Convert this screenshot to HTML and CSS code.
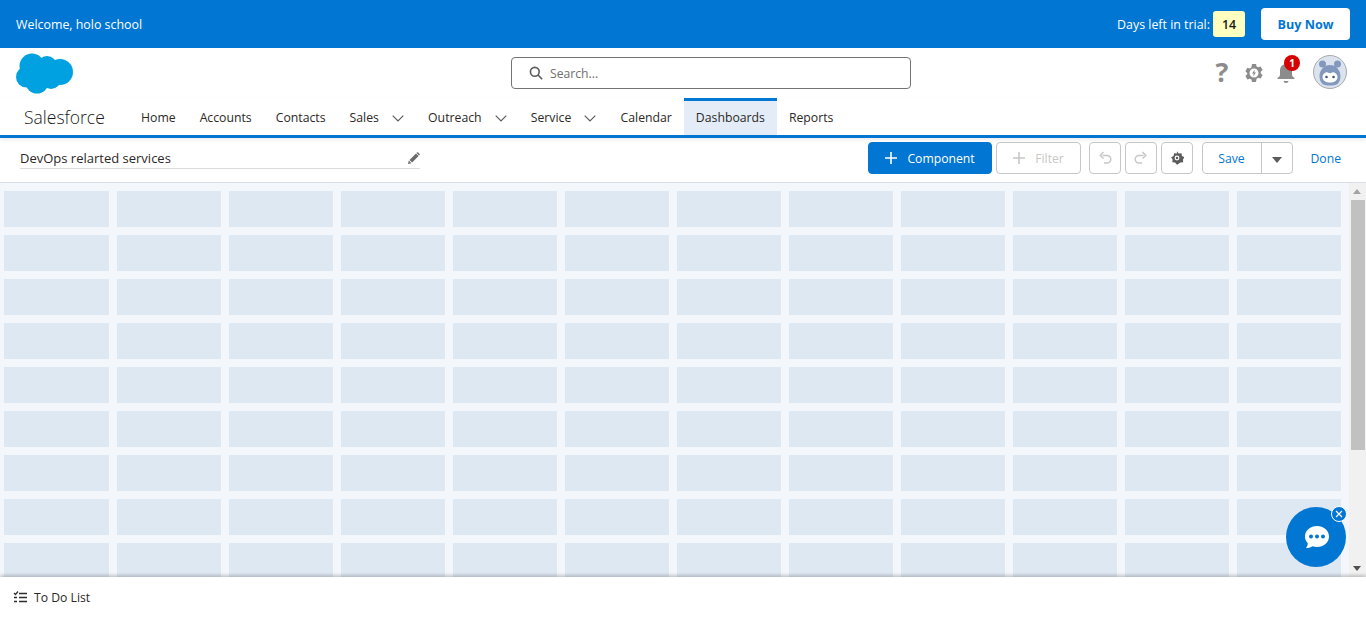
FILE: index.html
```html
<!DOCTYPE html>
<html lang="en">
<head>
  <meta charset="UTF-8">
  <meta name="viewport" content="width=device-width, initial-scale=1.0">
  <title>Salesforce - Dashboard Builder</title>
  <link rel="stylesheet" href="styles.css">
</head>
<body>

<div class="trial-bar">
  <span class="welcome">Welcome, holo school</span>
  <div class="trial-right">
    <span>Days left in trial:</span>
    <span class="days">14</span>
    <button class="buy">Buy Now</button>
  </div>
</div>

<header class="top">
  <svg class="logo" width="58" height="41" viewBox="0 0 58 41">
    <g fill="#00a1e0">
      <circle cx="16" cy="13" r="12.5"/>
      <circle cx="31" cy="13" r="10"/>
      <circle cx="44" cy="19" r="13"/>
      <circle cx="10.5" cy="24" r="10.5"/>
      <circle cx="21" cy="29" r="11.5"/>
      <circle cx="35" cy="26" r="10"/>
    </g>
  </svg>
  <div class="search">
    <svg width="14" height="14" viewBox="0 0 14 14" fill="none" stroke="#5c5c5c" stroke-width="1.6">
      <circle cx="5.8" cy="5.8" r="4.4"/>
      <path d="M9 9l4.2 4.2"/>
    </svg>
    <span>Search...</span>
  </div>
  <div class="top-icons">
    <span class="help">?</span>
    <svg class="gear" width="20" height="20" viewBox="0 0 20 20">
      <path fill="#8c8c8c" fill-rule="evenodd" d="M8 1h4l.6 2.4 1.6.9 2.4-.7 2 3.4-1.800 1.700v1.700l1.800 1.700-2 3.400-2.400-.7-1.600.9L12 19H8l-.6-2.400-1.600-.9-2.400.7-2-3.400 1.800-1.700V9.900L1.400 8.200l2-3.400 2.400.7 1.600-.9zM10 5.500a4.500 4.500 0 1 0 0 9 4.500 4.500 0 0 0 0-9z"/>
      <path fill="#8c8c8c" d="M10.800 6.500L8 10.500h1.700l-.5 3 2.800-4h-1.700z"/>
    </svg>
    <div class="bell">
      <svg width="20" height="20" viewBox="0 0 20 20">
        <path fill="#8c8c8c" d="M10 1a6 6 0 0 0-6 6v4.500c0 1.500-1 2.500-2.500 3.500v1h17v-1c-1.500-1-2.500-2-2.500-3.500V7a6 6 0 0 0-6-6zM7.500 18h5a2.500 2 0 0 1-5 0z"/>
      </svg>
      <span class="badge">1</span>
    </div>
    <svg class="avatar" width="34" height="34" viewBox="0 0 34 34">
      <circle cx="17" cy="17" r="16.5" fill="#dbe3ef" stroke="#a9a9a9"/>
      <circle cx="9.500" cy="9" r="3.500" fill="#8398bd"/>
      <circle cx="24.500" cy="9" r="3.500" fill="#8398bd"/>
      <path fill="#8398bd" d="M6.500 21a10.500 11 0 0 1 21 0c0 3-1 6-3 8-4 2-11 2-15 0-2-2-3-5-3-8z"/>
      <path fill="#fff" d="M9.500 22c0-2.500 2-4.500 4.500-5 1 1.500 5 1.500 6 0 2.500.5 4.500 2.500 4.500 5 0 3.500-3 5.500-7.500 5.500S9.500 25.500 9.500 22z"/>
      <circle cx="13.500" cy="22" r="1.300" fill="#41587d"/>
      <circle cx="20.500" cy="22" r="1.300" fill="#41587d"/>
    </svg>
  </div>
</header>

<nav class="nav">
  <span class="brand">Salesforce</span>
  <a class="tab">Home</a>
  <a class="tab">Accounts</a>
  <a class="tab">Contacts</a>
  <a class="tab">Sales <svg class="chev" width="12" height="7" viewBox="0 0 12 7"><path d="M.7.7L6 6l5.300-5.300" fill="none" stroke="#5c5c5c" stroke-width="1.200"/></svg></a>
  <a class="tab">Outreach <svg class="chev" width="12" height="7" viewBox="0 0 12 7"><path d="M.7.7L6 6l5.300-5.300" fill="none" stroke="#5c5c5c" stroke-width="1.200"/></svg></a>
  <a class="tab">Service <svg class="chev" width="12" height="7" viewBox="0 0 12 7"><path d="M.7.7L6 6l5.300-5.300" fill="none" stroke="#5c5c5c" stroke-width="1.200"/></svg></a>
  <a class="tab">Calendar</a>
  <a class="tab active">Dashboards</a>
  <a class="tab">Reports</a>
</nav>

<div class="toolbar">
  <div class="title-field">
    <span>DevOps relarted services</span>
    <svg width="12" height="12" viewBox="0 0 12 12"><path fill="#6b6b6b" d="M0 12l.8-3.400 2.600 2.600zM1.500 7.900L8 1.400l2.600 2.600-6.500 6.500zM8.800.6a1 1 0 0 1 1.400 0l1.200 1.200a1 1 0 0 1 0 1.400l-.3.300-2.600-2.600z"/></svg>
  </div>
  <div class="actions">
    <button class="btn primary"><svg width="14" height="14" viewBox="0 0 14 14"><path d="M7 1v12M1 7h12" stroke="#fff" stroke-width="1.600"/></svg>Component</button>
    <button class="btn filter"><svg width="14" height="14" viewBox="0 0 14 14"><path d="M7 1v12M1 7h12" stroke="#c9c7c5" stroke-width="1.600"/></svg>Filter</button>
    <button class="btn icon-btn"><svg width="14" height="14" viewBox="0 0 14 14" fill="none" stroke="#c9c7c5" stroke-width="1.500"><path d="M4.500 4.500h4.500a3.800 3.800 0 0 1 0 7.600H6"/><path d="M5.500 1L2.300 4.500l3.200 3"/></svg></button>
    <button class="btn icon-btn"><svg width="14" height="14" viewBox="0 0 14 14" fill="none" stroke="#c9c7c5" stroke-width="1.500"><path d="M9.500 4.500H5a3.800 3.800 0 0 0 0 7.600h3"/><path d="M8.500 1l3.200 3.500-3.200 3"/></svg></button>
    <button class="btn icon-btn"><svg width="14" height="14" viewBox="0 0 20 20"><path fill="#5c5c5c" fill-rule="evenodd" d="M10 .5l2.400 3.100 3.900-.4.800 3.800 3.400 2-2 3.300.4 3.900-3.900.4L10 19.500l-2.800-2.900-3.900-.4.400-3.900-2-3.300 3.400-2 .8-3.800 3.900.4zM10 6.500a3.500 3.500 0 1 0 0 7 3.500 3.500 0 0 0 0-7z"/><circle cx="10" cy="10" r="1.800" fill="#5c5c5c"/></svg></button>
    <div class="save-group">
      <button class="save">Save</button>
      <button class="save-drop"><span class="caret"></span></button>
    </div>
    <a class="done">Done</a>
  </div>
</div>

<main class="canvas">
  <div class="grid" id="grid"></div>
  <div class="scrollbar">
    <span class="arrow up"></span>
    <div class="thumb"></div>
    <span class="arrow down"></span>
  </div>
</main>

<footer class="todo">
  <svg width="14" height="13" viewBox="0 0 14 13">
    <path d="M1 2l1.500 1.500L5 .5" fill="none" stroke="#2b2b2b" stroke-width="1.200"/>
    <path d="M6 2.500h8M6 6.500h8M6 10.500h8" stroke="#2b2b2b" stroke-width="1.600"/>
    <path d="M1 6.500h3M1 10.500h3" stroke="#2b2b2b" stroke-width="1.600"/>
  </svg>
  <span>To Do List</span>
</footer>

<div class="chat">
  <svg width="26" height="24" viewBox="0 0 26 24">
    <path fill="#fff" d="M13 1c6.600 0 12 4.600 12 10.500S19.600 22 13 22c-1.600 0-3.100-.3-4.500-.8-1.500 1-3.500 1.800-6.500 1.800 1-1 1.700-2.800 1.800-4.700C2 16.500 1 14.100 1 11.500 1 5.600 6.400 1 13 1z"/>
    <circle cx="7" cy="11.500" r="2" fill="#0176d3"/>
    <circle cx="13" cy="11.500" r="2" fill="#0176d3"/>
    <circle cx="19" cy="11.500" r="2" fill="#0176d3"/>
  </svg>
  <span class="chat-close">
    <svg width="8" height="8" viewBox="0 0 8 8"><path d="M1 1l6 6M7 1L1 7" stroke="#fff" stroke-width="1.200"/></svg>
  </span>
</div>

<script>
  var grid = document.getElementById("grid");
  for (var i = 0; i < 120; i++) {
    var cell = document.createElement("div");
    cell.className = "cell";
    grid.appendChild(cell);
  }
</script>

</body>
</html>
```

FILE: styles.css
```css
* {
  box-sizing: border-box;
}
body {
  font-family: "Open Sans", Arial, sans-serif;
  font-size: 12.2px;
  color: #2b2826;
  background-color: #fff;
  margin: 0;
  height: 100vh;
  overflow: hidden;
  display: flex;
  flex-direction: column;
}
button {
  font-family: inherit;
  cursor: pointer;
}

/* Barra de prueba */
.trial-bar {
  height: 48px;
  flex: none;
  background-color: #0176d3;
  color: #fff;
  font-size: 12.4px;
  display: flex;
  align-items: center;
  justify-content: space-between;
  padding: 0 16px;
}
.trial-right {
  display: flex;
  align-items: center;
}
.days {
  width: 32px;
  height: 26px;
  margin: 0 16px 0 3px;
  background-color: #ffffc0;
  border-radius: 3px;
  color: #181818;
  font-weight: 600;
  display: flex;
  align-items: center;
  justify-content: center;
}
.buy {
  width: 89px;
  height: 32px;
  border: none;
  border-radius: 4px;
  background-color: #fff;
  color: #0176d3;
  font-size: 12.6px;
  font-weight: 700;
}

/* Cabecera */
.top {
  height: 50px;
  flex: none;
  position: relative;
  display: flex;
  align-items: flex-start;
  justify-content: center;
}
.logo {
  position: absolute;
  left: 16px;
  top: 5px;
}
.search {
  width: 400px;
  height: 32px;
  margin: 9px 0 0 56px;
  border: 1px solid #747474;
  border-radius: 4px;
  display: flex;
  align-items: center;
  gap: 7px;
  padding-left: 17px;
  color: #706e6b;
}
.top-icons {
  position: absolute;
  right: 19px;
  top: 6px;
  display: flex;
  align-items: center;
}
.help {
  width: 20px;
  margin: 1px 12px 0 1px;
  text-align: center;
  color: #8c8c8c;
  font-size: 27px;
  font-weight: 700;
  line-height: 34px;
}
.gear {
  margin-top: 2px;
}
.bell {
  position: relative;
  margin: 2px 17px 0 12px;
  display: flex;
}
.badge {
  position: absolute;
  left: 8px;
  top: -8px;
  width: 16px;
  height: 16px;
  border-radius: 50%;
  background-color: #d60000;
  color: #fff;
  font-size: 10px;
  font-weight: 700;
  text-align: center;
  line-height: 16px;
}

/* Navegacion */
.nav {
  height: 40px;
  flex: none;
  display: flex;
  border-bottom: 3px solid #0176d3;
  padding-left: 24px;
  position: relative;
  box-shadow: 0 2px 4px rgba(0, 0, 0, 0.08);
}
.brand {
  width: 105px;
  font-size: 17.5px;
  font-weight: 300;
  color: #181818;
  line-height: 38px;
}
.tab {
  padding: 1px 12px 0;
  font-size: 12.25px;
  display: flex;
  align-items: center;
  white-space: nowrap;
}
.chev {
  margin: 2px 0.2px 0 13px;
}
.tab.active {
  background-color: #e4edf7;
  border-top: 3px solid #0176d3;
  padding: 0 12px 2px;
}

/* Barra de herramientas */
.toolbar {
  height: 45px;
  flex: none;
  display: flex;
  align-items: center;
  justify-content: space-between;
  padding: 0 25px 4px 20px;
  border-bottom: 1px solid #d8dde6;
}
.title-field {
  width: 400px;
  height: 21px;
  border-bottom: 1px solid #dddbda;
  display: flex;
  align-items: center;
  justify-content: space-between;
  font-size: 13px;
}
.actions {
  display: flex;
  align-items: center;
  gap: 4px;
}
.btn {
  height: 32px;
  border: 1px solid #c9c7c5;
  border-radius: 4px;
  background-color: #fff;
  font-size: 12.2px;
  display: flex;
  align-items: center;
  justify-content: center;
  padding: 0;
}
.primary {
  width: 124px;
  gap: 9px;
  background-color: #0176d3;
  border-color: #0176d3;
  color: #fff;
}
.filter {
  width: 85px;
  gap: 9px;
  margin-right: 4px;
  color: #c9c7c5;
}
.icon-btn {
  width: 32px;
}
.save-group {
  display: flex;
  height: 32px;
  margin-left: 5px;
  border: 1px solid #c9c7c5;
  border-radius: 4px;
}
.save {
  width: 59px;
  border: none;
  border-right: 1px solid #c9c7c5;
  background: none;
  color: #0176d3;
  font-size: 12.2px;
  padding: 0;
}
.save-drop {
  width: 30px;
  border: none;
  background: none;
  padding: 0;
}
.caret {
  display: inline-block;
  border-left: 5.500px solid transparent;
  border-right: 5.500px solid transparent;
  border-top: 6px solid #5c5c5c;
}
.done {
  margin-left: 14px;
  color: #0176d3;
}

/* Lienzo */
.canvas {
  flex: 1;
  min-height: 0;
  display: flex;
  background-color: #f3f6fb;
  overflow: hidden;
}
.grid {
  flex: 1;
  display: grid;
  grid-template-columns: repeat(12, 1fr);
  grid-auto-rows: 36px;
  gap: 8px;
  padding: 8px 8px 0 4.49px;
  align-content: start;
  height: 100%;
  overflow: hidden;
}
.cell {
  background-color: #dee8f2;
}
.scrollbar {
  width: 17px;
  flex: none;
  background-color: #f1f1f1;
  position: relative;
}
.thumb {
  position: absolute;
  top: 17px;
  left: 2px;
  right: 1px;
  height: 250px;
  background-color: #c1c1c1;
}
.arrow {
  position: absolute;
  left: 4px;
  border-left: 4px solid transparent;
  border-right: 4px solid transparent;
}
.arrow.up {
  top: 6px;
  border-bottom: 5px solid #a3a3a3;
}
.arrow.down {
  bottom: 6px;
  border-top: 5px solid #505050;
}

/* Pie */
.todo {
  height: 40px;
  flex: none;
  position: relative;
  display: flex;
  align-items: center;
  gap: 7px;
  padding-left: 13px;
  background-color: #fff;
  box-shadow: 0 -2px 3px rgba(0, 0, 0, 0.2);
}

/* Chat */
.chat {
  position: absolute;
  left: 1286px;
  top: 507px;
  width: 60px;
  height: 60px;
  padding-left: 2px;
  border-radius: 50%;
  background-color: #0176d3;
  display: flex;
  align-items: center;
  justify-content: center;
}
.chat-close {
  position: absolute;
  left: 45px;
  top: -1px;
  width: 16px;
  height: 16px;
  border-radius: 50%;
  background-color: #0176d3;
  border: 1px solid #fff;
  display: flex;
  align-items: center;
  justify-content: center;
}
```
